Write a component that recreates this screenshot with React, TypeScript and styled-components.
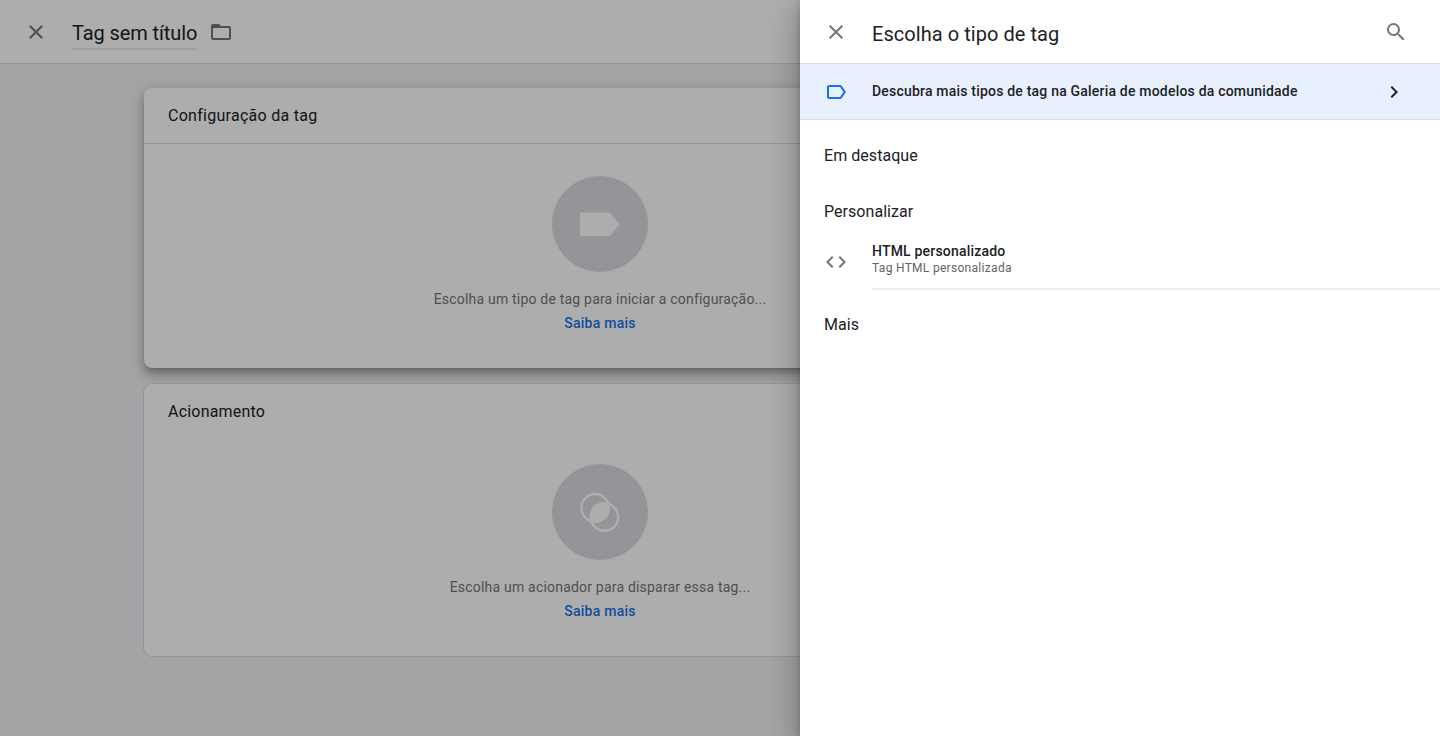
import React from 'react';
import styled, { createGlobalStyle } from 'styled-components';

const GlobalStyle = createGlobalStyle`
  *, *::before, *::after { box-sizing: border-box; }
  body {
    margin: 0;
    overflow: hidden;
    font-family: Roboto, "Liberation Sans", sans-serif;
    color: #202124;
  }
  h1, h2, p { margin: 0; font-weight: 400; }
`;

const Screen = styled.div`
  position: relative;
  height: 736px;
  overflow: hidden;
  background: #f0f2f5;
`;

const TopBar = styled.header`
  display: flex;
  align-items: flex-start;
  height: 64px;
  padding: 20px 24px 0;
  background: #fff;
  border-bottom: 1px solid #dadce0;
`;

const IconButton = styled.button`
  display: flex;
  flex: none;
  padding: 0;
  border: 0;
  background: none;
  color: #757575;
`;

const TagName = styled.h1`
  height: 30px;
  margin: 0 12px 0 24px;
  border-bottom: 2px solid #ececec;
  font-size: 20px;
  line-height: 27px;
  letter-spacing: -0.1px;
  white-space: nowrap;
`;

const Workspace = styled.main`
  display: flex;
  flex-direction: column;
  gap: 14px;
  width: 914px;
  margin-left: 143px;
  padding-top: 23px;
`;

const Card = styled.section`
  height: 274px;
  border: 1px solid #dadce0;
  border-radius: 9px;
  background: #fff;
`;

const RaisedCard = styled(Card)`
  height: 280px;
  margin: 1px;
  border: 0;
  border-radius: 8px;
  box-shadow: 0 5px 5px -3px rgba(0, 0, 0, 0.2), 0 8px 10px 1px rgba(0, 0, 0, 0.14),
    0 3px 14px 2px rgba(0, 0, 0, 0.16);
`;

const CardTitle = styled.h2<{ $divided?: boolean }>`
  height: 56px;
  padding-left: 24px;
  border-bottom: 1px solid ${({ $divided }) => ($divided ? '#dadce0' : 'transparent')};
  font-size: 16px;
  line-height: 55px;
  letter-spacing: ${({ $divided }) => ($divided ? 0.28 : 0.2)}px;
`;

const EmptyState = styled.div<{ $top: number }>`
  display: flex;
  flex-direction: column;
  align-items: center;
  padding-top: ${({ $top }) => $top}px;
`;

const Medallion = styled.div`
  display: grid;
  place-items: center;
  width: 96px;
  height: 96px;
  margin-bottom: 15px;
  border-radius: 50%;
  background: #dadce0;
`;

const Hint = styled.p`
  font-size: 14px;
  line-height: 24px;
  letter-spacing: 0.2px;
  color: #757575;
`;

const Link = styled.a`
  font-size: 14px;
  font-weight: 500;
  line-height: 24px;
  letter-spacing: 0.25px;
  color: #1a73e8;
`;

const Scrim = styled.div`
  position: absolute;
  inset: 0;
  background: rgba(0, 0, 0, 0.32);
`;

const Drawer = styled.aside`
  position: absolute;
  top: 0;
  right: 0;
  bottom: 0;
  width: 640px;
  background: #fff;
  box-shadow: 0 8px 10px -5px rgba(0, 0, 0, 0.2), 0 16px 24px 2px rgba(0, 0, 0, 0.14),
    0 6px 30px 5px rgba(0, 0, 0, 0.12), 0 0 8px rgba(0, 0, 0, 0.15);
`;

const DrawerTitle = styled.h1`
  flex: 1;
  margin-left: 24px;
  font-size: 20px;
  line-height: 28px;
  letter-spacing: 0.05px;
`;

const SearchSlot = styled.div`
  margin-right: 8px;
`;

const GalleryBanner = styled.div`
  display: flex;
  align-items: center;
  height: 56px;
  padding: 0 34px 0 24px;
  border-bottom: 1px solid #dadce0;
  background: #e8f0fe;
`;

const BannerText = styled.span`
  flex: 1;
  margin: 0 0 1px 24px;
  font-size: 14px;
  font-weight: 500;
  letter-spacing: 0.2px;
`;

const TypeGroups = styled.div`
  padding: 8px 0 0 24px;
`;

const GroupTitle = styled.h2`
  height: 56px;
  font-size: 16px;
  line-height: 56px;
  letter-spacing: 0.05px;
`;

const TypeRow = styled.div`
  display: flex;
  height: 50px;
  margin-bottom: 7px;
  padding-top: 2px;
`;

const TypeIcon = styled.div`
  display: flex;
  width: 48px;
  padding-top: 8px;
  color: #757575;
`;

const TypeText = styled.div`
  flex: 1;
  border-bottom: 2px solid #ececec;
`;

const TypeName = styled.p`
  font-size: 14px;
  font-weight: 500;
  line-height: 18px;
  letter-spacing: 0.2px;
`;

const TypeDescription = styled.p`
  font-size: 12px;
  line-height: 16px;
  letter-spacing: 0.3px;
  color: #5f6368;
`;

const Glyph = ({ d, color }: { d: string; color?: string }) => (
  <svg width="24" height="24" viewBox="0 0 24 24" fill={color ?? 'currentColor'}>
    <path d={d} />
  </svg>
);

const closePath =
  'M19 6.41L17.59 5 12 10.59 6.41 5 5 6.41 10.59 12 5 17.59 6.41 19 12 13.41 17.59 19 19 17.59 13.41 12z';
const folderPath =
  'M20 6h-8l-2-2H4c-1.1 0-1.99.9-1.99 2L2 18c0 1.1.9 2 2 2h16c1.1 0 2-.9 2-2V8c0-1.1-.9-2-2-2zm0 12H4V8h16v10z';
const searchPath =
  'M15.5 14h-.79l-.28-.27A6.471 6.471 0 0 0 16 9.5 6.5 6.5 0 1 0 9.5 16c1.61 0 3.09-.59 4.23-1.57l.27.28v.79l5 4.99L20.49 19l-4.99-5zm-6 0C7.01 14 5 11.99 5 9.5S7.01 5 9.5 5 14 7.01 14 9.5 11.99 14 9.5 14z';
const labelPath =
  'M17.63 5.84C17.27 5.33 16.67 5 16 5L5 5.01C3.9 5.01 3 5.9 3 7v10c0 1.1.9 1.99 2 1.99L16 19c.67 0 1.27-.33 1.63-.84L22 12l-4.37-6.16zM16 17H5V7h11l3.55 5L16 17z';
const chevronPath = 'M10 6L8.59 7.41 13.17 12l-4.58 4.59L10 18l6-6z';
const codePath =
  'M9.4 16.6L4.8 12l4.6-4.6L8 6l-6 6 6 6 1.4-1.4zm5.2 0l4.6-4.6-4.6-4.6L16 6l6 6-6 6-1.4-1.4z';

const TagShape = () => (
  <svg width="40" height="24" viewBox="0 0 40 24" fill="#fff">
    <path d="M0 .6h30l9.8 11.7-9.8 11.7H0z" />
  </svg>
);

const TriggerShape = () => (
  <svg width="40" height="40" viewBox="0 0 40 40" fill="none" stroke="#fff" strokeWidth="2.5">
    <circle cx="15.1" cy="15.9" r="13.8" />
    <circle cx="24.4" cy="25" r="13.8" />
    <path fill="#fff" stroke="none" d="M28.8 11.6A15 15 0 0 0 10.7 29.3 15 15 0 0 0 28.8 11.6z" />
  </svg>
);

export default function App() {
  return (
    <>
      <GlobalStyle />
      <Screen>
        <TopBar>
          <IconButton aria-label="Fechar"><Glyph d={closePath} /></IconButton>
          <TagName>Tag sem título</TagName>
          <IconButton aria-label="Pasta"><Glyph d={folderPath} /></IconButton>
        </TopBar>
        <Workspace>
          <RaisedCard>
            <CardTitle $divided>Configuração da tag</CardTitle>
            <EmptyState $top={32}>
              <Medallion><TagShape /></Medallion>
              <Hint>Escolha um tipo de tag para iniciar a configuração...</Hint>
              <Link>Saiba mais</Link>
            </EmptyState>
          </RaisedCard>
          <Card>
            <CardTitle>Acionamento</CardTitle>
            <EmptyState $top={24}>
              <Medallion><TriggerShape /></Medallion>
              <Hint>Escolha um acionador para disparar essa tag...</Hint>
              <Link>Saiba mais</Link>
            </EmptyState>
          </Card>
        </Workspace>
        <Scrim />
        <Drawer>
          <TopBar>
            <IconButton aria-label="Fechar"><Glyph d={closePath} /></IconButton>
            <DrawerTitle>Escolha o tipo de tag</DrawerTitle>
            <SearchSlot>
              <IconButton aria-label="Pesquisar"><Glyph d={searchPath} /></IconButton>
            </SearchSlot>
          </TopBar>
          <GalleryBanner>
            <Glyph d={labelPath} color="#1a73e8" />
            <BannerText>Descubra mais tipos de tag na Galeria de modelos da comunidade</BannerText>
            <Glyph d={chevronPath} color="#202124" />
          </GalleryBanner>
          <TypeGroups>
            <GroupTitle>Em destaque</GroupTitle>
            <GroupTitle>Personalizar</GroupTitle>
            <TypeRow>
              <TypeIcon><Glyph d={codePath} /></TypeIcon>
              <TypeText>
                <TypeName>HTML personalizado</TypeName>
                <TypeDescription>Tag HTML personalizada</TypeDescription>
              </TypeText>
            </TypeRow>
            <GroupTitle>Mais</GroupTitle>
          </TypeGroups>
        </Drawer>
      </Screen>
    </>
  );
}
